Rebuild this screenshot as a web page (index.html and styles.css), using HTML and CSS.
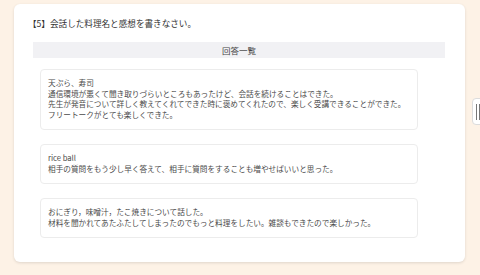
FILE: index.html
```html
<!DOCTYPE html>
<html lang="ja">
<head>
<meta charset="utf-8">
<link rel="stylesheet" href="styles.css">
</head>
<body>
<div class="page">
  <div class="card">
    <div class="title">【5】会話した料理名と感想を書きなさい。</div>
    <div class="bar">回答一覧</div>
    <div class="list">
      <div class="answer">天ぷら、寿司<br>通信環境が悪くて聞き取りづらいところもあったけど、会話を続けることはできた。<br>先生が発音について詳しく教えてくれてできた時に褒めてくれたので、楽しく受講できることができた。<br>フリートークがとても楽しくできた。</div>
      <div class="answer">rice ball<br>相手の質問をもう少し早く答えて、相手に質問をすることも増やせばいいと思った。</div>
      <div class="answer">おにぎり，味噌汁，たこ焼きについて話した。<br>材料を聞かれてあたふたしてしまったのでもっと料理をしたい。雑談もできたので楽しかった。</div>
    </div>
  </div>
  <div class="tab"><span class="grip"></span><span class="grip"></span></div>
</div>
</body>
</html>
```

FILE: styles.css
```css
html, body {
  margin: 0;
  padding: 0;
}
body {
  background: #fdf2e6;
  width: 480px;
  height: 275px;
  overflow: hidden;
  font-family: "Noto Sans CJK JP", "Noto Sans", sans-serif;
  color: #444;
}
.page {
  position: relative;
  padding: 4px 15px 0 14px;
}
.card {
  background: #fff;
  border-radius: 6px;
  box-shadow: 0 1px 3px rgba(0,0,0,0.12);
  width: 451px;
  height: 258px;
  box-sizing: border-box;
  padding: 13px 20px 0 19px;
}
.title {
  font-size: 8.6px;
  line-height: 12px;
  margin-left: -5px;
  color: #333;
}
.bar {
  margin-top: 13px;
  height: 16px;
  line-height: 16px;
  background: #f1f1f4;
  text-align: center;
  font-size: 8.5px;
  color: #444;
}
.list {
  margin-top: 11px;
  margin-left: 7px;
  width: 378px;
  display: flex;
  flex-direction: column;
  gap: 14px;
}
.answer {
  border: 1px solid #ececec;
  border-radius: 4px;
  padding: 8px 7px 9px;
  font-size: 7.65px;
  line-height: 10.5px;
  color: #4a4a4a;
  white-space: nowrap;
}
.tab {
  position: absolute;
  left: 472px;
  top: 98px;
  width: 12px;
  height: 27px;
  background: #fff;
  border: 1px solid #dcdcdc;
  border-radius: 4px 0 0 4px;
  box-sizing: border-box;
  display: flex;
  gap: 2px;
  padding: 5px 0 0 3px;
}
.grip {
  display: block;
  width: 1px;
  height: 16px;
  background: #777;
}
```
